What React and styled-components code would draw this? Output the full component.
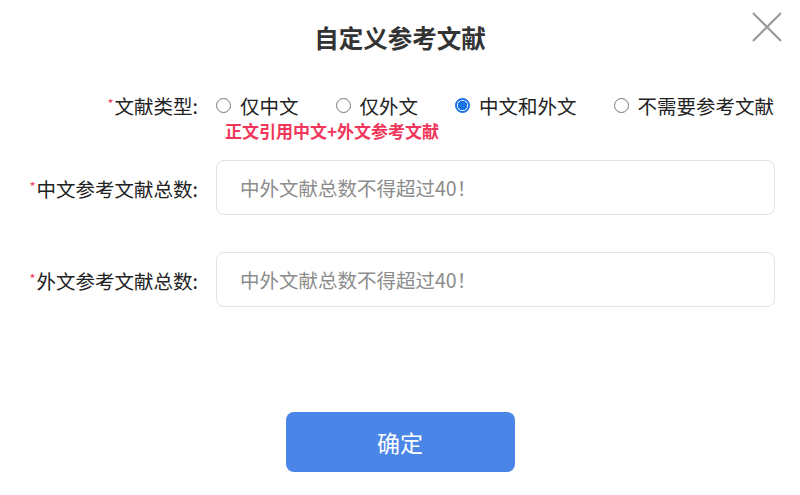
import React, { useState } from "react";
import styled, { createGlobalStyle } from "styled-components";

const GlobalStyle = createGlobalStyle`
  html, body {
    margin: 0;
    padding: 0;
    background: #ffffff;
  }
  body {
    font-family: "Noto Sans CJK SC", "Noto Sans", "Liberation Sans", sans-serif;
  }
`;

const Dialog = styled.div`
  position: relative;
  width: 800px;
  height: 495px;
  box-sizing: border-box;
  padding: 22px 25px 0 0;
  display: flex;
  flex-direction: column;
  background: #fff;
`;

const Title = styled.h2`
  margin: 0 0 0 25px;
  height: 32px;
  line-height: 32px;
  font-size: 24.5px;
  font-weight: 700;
  color: #333;
  text-align: center;
`;

const CloseButton = styled.button`
  position: absolute;
  top: 11px;
  right: 17px;
  width: 32px;
  height: 32px;
  padding: 0;
  border: none;
  background: none;
  cursor: pointer;
`;

const Form = styled.div`
  margin-top: 36px;
  display: grid;
  grid-template-columns: 198px minmax(0, 1fr);
  column-gap: 18px;
  align-items: center;
`;

const Label = styled.label`
  font-size: 19.5px;
  color: #222;
  text-align: right;
  white-space: nowrap;
  line-height: 28px;
`;

const Star = styled.span`
  color: #f0455f;
  font-size: 13px;
  vertical-align: 5px;
  margin-right: 1px;
`;

const RadioGroup = styled.div`
  display: flex;
  align-items: center;
  gap: 37px;
  height: 28px;
`;

const RadioItem = styled.label`
  display: flex;
  align-items: center;
  gap: 9px;
  font-size: 19.5px;
  color: #222;
  cursor: pointer;
  white-space: nowrap;
`;

const RadioDot = styled.span`
  width: 15px;
  height: 15px;
  flex: none;
  box-sizing: border-box;
  border-radius: 50%;
  border: 1px solid ${(p) => (p.$checked ? "#1a73e8" : "#767676")};
  background: ${(p) =>
    p.$checked
      ? "radial-gradient(circle, #1a73e8 0 4.5px, #fff 5px)"
      : "#fff"};
  ${(p) => p.$checked && "border-width: 2px;"}
`;

const Hint = styled.div`
  grid-column: 2;
  margin: 0 0 0 9px;
  font-size: 17px;
  font-weight: 700;
  color: #f0365a;
  line-height: 22px;
`;

const Input = styled.input`
  height: 55px;
  box-sizing: border-box;
  width: 100%;
  border: 1px solid #e3e3e3;
  border-radius: 8px;
  padding: 0 23px;
  font-family: inherit;
  font-size: 19.5px;
  color: #333;
  outline: none;
  margin-top: ${(p) => p.$top}px;

  &::placeholder {
    color: #8c8c8c;
  }
`;

const Spacer = styled.div`
  margin-top: ${(p) => p.$top}px;
`;

const Footer = styled.div`
  margin-top: 105px;
  padding-left: 25px;
  display: flex;
  justify-content: center;
`;

const ConfirmButton = styled.button`
  width: 229px;
  height: 60px;
  border: none;
  border-radius: 8px;
  background: #4a86e8;
  color: #fff;
  font-family: inherit;
  font-size: 23px;
  font-weight: 400;
  cursor: pointer;
`;

const options = ["仅中文", "仅外文", "中文和外文", "不需要参考文献"];

export default function App() {
  const [choice, setChoice] = useState(2);

  return (
    <>
      <GlobalStyle />
      <Dialog>
        <Title>自定义参考文献</Title>
        <CloseButton aria-label="close">
          <svg width="32" height="32" viewBox="0 0 32 32">
            <path
              d="M2 2 L30 30 M30 2 L2 30"
              stroke="#9a9a9a"
              strokeWidth="2.2"
              fill="none"
            />
          </svg>
        </CloseButton>
        <Form>
          <Label>
            <Star>*</Star>文献类型:
          </Label>
          <RadioGroup>
            {options.map((o, i) => (
              <RadioItem key={o} onClick={() => setChoice(i)}>
                <RadioDot $checked={choice === i} />
                {o}
              </RadioItem>
            ))}
          </RadioGroup>
          <Hint>正文引用中文+外文参考文献</Hint>

          <Spacer $top={18}>
            <Label as="div">
              <Star>*</Star>中文参考文献总数:
            </Label>
          </Spacer>
          <Input $top={18} placeholder="中外文献总数不得超过40！" />

          <Spacer $top={37}>
            <Label as="div">
              <Star>*</Star>外文参考文献总数:
            </Label>
          </Spacer>
          <Input $top={37} placeholder="中外文献总数不得超过40！" />
        </Form>
        <Footer>
          <ConfirmButton>确定</ConfirmButton>
        </Footer>
      </Dialog>
    </>
  );
}
